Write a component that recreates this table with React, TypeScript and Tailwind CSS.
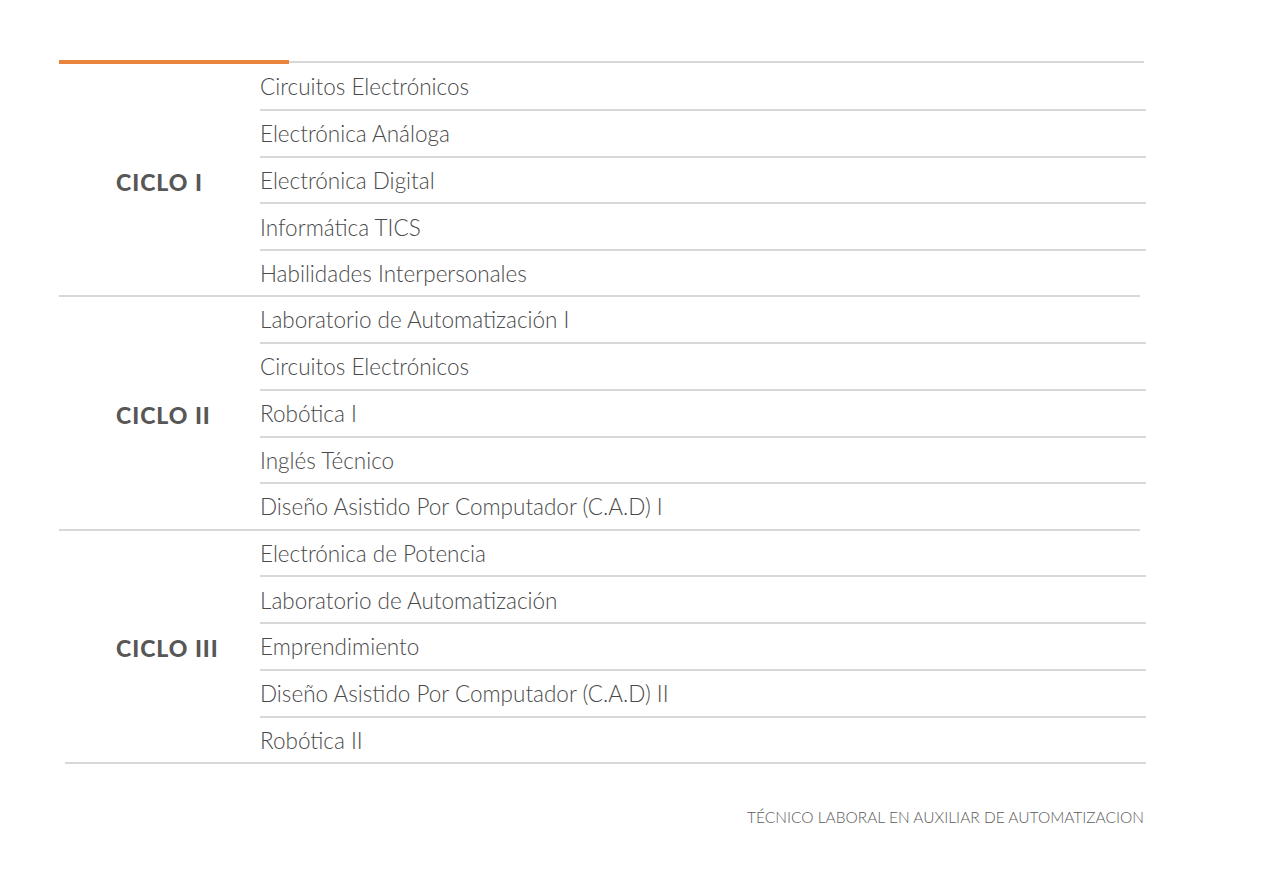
const ciclos = [
  {
    label: 'CICLO I',
    materias: [
      'Circuitos Electrónicos',
      'Electrónica Análoga',
      'Electrónica Digital',
      'Informática TICS',
      'Habilidades Interpersonales',
    ],
  },
  {
    label: 'CICLO II',
    materias: [
      'Laboratorio de Automatización I',
      'Circuitos Electrónicos',
      'Robótica I',
      'Inglés Técnico',
      'Diseño Asistido Por Computador (C.A.D) I',
    ],
  },
  {
    label: 'CICLO III',
    materias: [
      'Electrónica de Potencia',
      'Laboratorio de Automatización',
      'Emprendimiento',
      'Diseño Asistido Por Computador (C.A.D) II',
      'Robótica II',
    ],
  },
];

export default function App() {
  return (
    <div className="min-h-[887px] w-full bg-white font-['Lato',sans-serif]">
      <div className="ml-[59px] w-[1087px] pt-[60px]">
        {/* top rule */}
        <div className="flex items-center">
          <div className="h-[4px] w-[230px] bg-[#e8843c]" />
          <div className="mr-[2px] h-[2px] flex-1 bg-[#d8d8d8]" />
        </div>

        {ciclos.map((ciclo, i) => (
          <div key={i}>
            <div className="flex">
              <div className="flex w-[201px] items-center pl-[57px] pt-[5px]">
                <span className="text-[23px] font-black tracking-[1px] text-[#575757]">
                  {ciclo.label}
                </span>
              </div>
              <div className="flex-1">
                {ciclo.materias.map((m, j) => (
                  <div
                    key={j}
                    className={`flex items-center pt-[2px] ${
                      j < ciclo.materias.length - 1
                        ? 'h-[46.8px] border-b-2 border-[#d8d8d8]'
                        : 'h-[44.1px]'
                    }`}
                  >
                    <span className="text-[22.5px] font-light leading-none text-[#4a4a4a]">{m}</span>
                  </div>
                ))}
              </div>
            </div>
            {i < ciclos.length - 1 ? (
              <div className="mr-[6px] h-[2px] bg-[#d8d8d8]" />
            ) : (
              <div className="ml-[6px] h-[2px] bg-[#d8d8d8]" />
            )}
          </div>
        ))}

        <div className="mr-[2px] mt-[42px] text-right text-[15.5px] font-light text-[#5a5a5a]">
          TÉCNICO LABORAL EN AUXILIAR DE AUTOMATIZACION
        </div>
      </div>
    </div>
  );
}
